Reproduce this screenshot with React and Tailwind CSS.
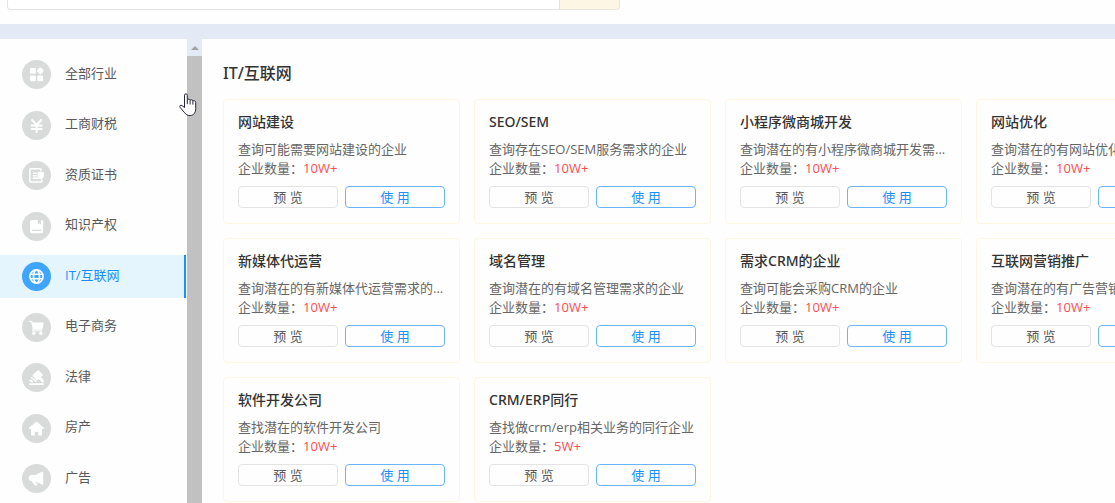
import React from 'react';

const industries = [
  { id: 'all', name: '全部行业', icon: GridIcon },
  { id: 'finance', name: '工商财税', icon: YenIcon },
  { id: 'cert', name: '资质证书', icon: CertIcon },
  { id: 'ip', name: '知识产权', icon: BookIcon },
  { id: 'it', name: 'IT/互联网', icon: GlobeIcon },
  { id: 'ecommerce', name: '电子商务', icon: CartIcon },
  { id: 'law', name: '法律', icon: GavelIcon },
  { id: 'house', name: '房产', icon: HomeIcon },
  { id: 'ads', name: '广告', icon: HornIcon },
];

const templates = [
  { title: '网站建设', desc: '查询可能需要网站建设的企业', count: '10W+' },
  { title: 'SEO/SEM', desc: '查询存在SEO/SEM服务需求的企业', count: '10W+' },
  { title: '小程序微商城开发', desc: '查询潜在的有小程序微商城开发需...', count: '10W+' },
  { title: '网站优化', desc: '查询潜在的有网站优化需求的企业', count: '10W+' },
  { title: '新媒体代运营', desc: '查询潜在的有新媒体代运营需求的...', count: '10W+' },
  { title: '域名管理', desc: '查询潜在的有域名管理需求的企业', count: '10W+' },
  { title: '需求CRM的企业', desc: '查询可能会采购CRM的企业', count: '10W+' },
  { title: '互联网营销推广', desc: '查询潜在的有广告营销需求的企业', count: '10W+' },
  { title: '软件开发公司', desc: '查找潜在的软件开发公司', count: '10W+' },
  { title: 'CRM/ERP同行', desc: '查找做crm/erp相关业务的同行企业', count: '5W+' },
];

// All sidebar icons share a 29x29 canvas, the size of the round badge
function Icon({ children }) {
  return (
    <svg viewBox="0 0 29 29" className="h-full w-full" fill="#fff" aria-hidden="true">
      {children}
    </svg>
  );
}

function GridIcon() {
  return (
    <Icon>
      <rect x="8" y="8" width="5.8" height="5.8" rx="1.3" />
      <rect x="8" y="15.4" width="5.8" height="5.8" rx="1.3" />
      <rect x="15.3" y="15.4" width="5.8" height="5.8" rx="1.3" />
      <rect x="15.5" y="8.1" width="5.6" height="5.6" rx="1.6" transform="rotate(45 18.3 10.9)" />
    </Icon>
  );
}

function YenIcon() {
  return (
    <Icon>
      <path
        d="M10 9l4.600 4.800L19.200 9M14.600 13.800v7.400M9.600 14.600h10M9.600 18h10"
        fill="none"
        stroke="#fff"
        strokeWidth="2"
        strokeLinecap="round"
      />
    </Icon>
  );
}

function CertIcon() {
  return (
    <Icon>
      <path
        d="M19 9.2V9c0-.7-.5-1.200-1.200-1.200H9C8.300 7.800 7.800 8.300 7.800 9v10.800c0 .7.500 1.200 1.200 1.200h9.600c.7 0 1.200-.5 1.200-1.200v-.6"
        fill="none"
        stroke="#fff"
        strokeWidth="1.6"
        strokeLinecap="round"
      />
      <path d="M10.800 12.200h4M10.800 14.700h4M10.800 17.200h5.400" fill="none" stroke="#fff" strokeWidth="1.400" />
      <path d="M15.600 11.200l3.100-.8 3.100.8v4c0 1.600-1.400 2.600-3.100 3.300-1.700-.7-3.100-1.700-3.100-3.300z" />
    </Icon>
  );
}

function BookIcon() {
  return (
    <Icon>
      <path d="M9.800 8h6v4.400l1.600-1.100 1.600 1.100V8h.4c1 0 1.800.8 1.800 1.800v9.600c0 1-.8 1.800-1.800 1.800H9.800c-1 0-1.800-.8-1.800-1.800V9.800C8 8.800 8.800 8 9.800 8z" />
      <path d="M10 18.300h9" stroke="#d9dbdb" strokeWidth="1.200" />
    </Icon>
  );
}

function GlobeIcon() {
  return (
    <Icon>
      <g fill="none" stroke="#fff" strokeWidth="1.600">
        <circle cx="14.500" cy="14.500" r="6.600" />
        <ellipse cx="14.500" cy="14.500" rx="3" ry="6.600" />
        <path d="M8.300 12.300h12.400M8.300 16.700h12.400" />
      </g>
    </Icon>
  );
}

function CartIcon() {
  return (
    <Icon>
      <path d="M7.200 7.700h2.300c.4 0 .7.200.8.600l.3 1.200h11.100l-1.200 6.500c-.1.400-.4.700-.8.700h-8.800L9.100 9.100H7.200z" />
      <path d="M11 16l-.6 1.900h9.600" fill="none" stroke="#fff" strokeWidth="1" />
      <circle cx="11.800" cy="20.300" r="1.700" />
      <circle cx="18.800" cy="20.300" r="1.700" />
    </Icon>
  );
}

function GavelIcon() {
  return (
    <Icon>
      <rect x="11.600" y="8.600" width="8.200" height="7.200" rx="1" transform="rotate(-42 15.700 12.200)" />
      <path d="M16.500 13.500l4.200 4.600" stroke="#fff" strokeWidth="2.600" strokeLinecap="round" />
      <path d="M9.800 14.800l4 3.400M8 17.500l2.200 1.100" stroke="#fff" strokeWidth="1.700" strokeLinecap="round" />
      <rect x="7" y="20.200" width="15" height="1.800" rx=".9" />
    </Icon>
  );
}

function HomeIcon() {
  return (
    <Icon>
      <path d="M13.700 8a1.300 1.300 0 0 1 1.600 0l6.500 5.700c.5.500.2 1.300-.5 1.300H20v5.400c0 .7-.5 1.200-1.200 1.200h-2.500v-3.500h-3.600v3.500h-2.500c-.7 0-1.200-.5-1.200-1.200V15H7.700c-.7 0-1-.8-.5-1.300z" />
    </Icon>
  );
}

function HornIcon() {
  return (
    <Icon>
      <path d="M19.900 7.800c.6-.4 1.300 0 1.300.7v11.400c0 .7-.7 1.100-1.300.7l-5.500-2.700-.9-.2 1.700 2.500c.4.600 0 1.400-.7 1.400h-1.300c-.4 0-.7-.2-.9-.5l-2.500-3.800c-1.900-.3-3.300-1.500-3.300-3.100 0-1.800 1.500-3.200 3.500-3.200h3.500z" />
    </Icon>
  );
}

function SearchBar() {
  return (
    <header className="h-6 shrink-0 bg-[#fefefe] px-[7px]">
      <form className="flex h-[10px] w-full max-w-[613px]" onSubmit={(e) => e.preventDefault()}>
        <input
          type="text"
          aria-label="搜索"
          className="min-w-0 flex-1 rounded-bl border border-t-0 border-[#e3e3e3] bg-white px-3 outline-none"
        />
        <button
          type="submit"
          aria-label="搜索"
          className="w-[60px] rounded-br border border-t-0 border-l-0 border-[#e8e6e0] bg-[#fef6e4]"
        />
      </form>
    </header>
  );
}

function Sidebar({ active, onSelect }) {
  return (
    <nav className="flex w-[187px] shrink-0 flex-col justify-between pt-[14px] pr-px pb-[3px]">
      {industries.map(({ id, name, icon: ItemIcon }) => {
        const isActive = id === active;
        return (
          <button
            key={id}
            type="button"
            onClick={() => onSelect(id)}
            className={`flex h-[43px] items-center gap-[14px] border-r-2 pl-[22px] text-[13px] ${
              isActive
                ? 'border-[#1890ff] bg-[#e5f5fe] text-[#1890ff]'
                : 'border-transparent text-[#595959]'
            }`}
          >
            <span className={`h-[29px] w-[29px] rounded-full ${isActive ? 'bg-[#40a5fe]' : 'bg-[#d9dbdb]'}`}>
              <ItemIcon />
            </span>
            <span className="pb-[2px]">{name}</span>
          </button>
        );
      })}
    </nav>
  );
}

function ScrollBar() {
  return (
    <div className="flex w-[15px] shrink-0 flex-col bg-[#e4eaf5]">
      <div className="flex h-[17px] items-center justify-center">
        <svg viewBox="0 0 8 4" className="h-1 w-2" aria-hidden="true">
          <path d="M0 4L4 0l4 4z" fill="#a3a3a3" />
        </svg>
      </div>
      <div className="flex-1 bg-[#c1c1c1]" />
    </div>
  );
}

function TemplateCard({ title, desc, count }) {
  return (
    <article className="rounded border border-[#fdf6e0] px-[14px] pt-3 pb-[15px]">
      <h3 className="mb-2 font-['Noto_Sans','Noto_Sans_CJK_SC',sans-serif] text-[14px] leading-5 font-medium text-[#333]">
        {title}
      </h3>
      <p className="text-[13px] leading-[19px] whitespace-nowrap text-[#666]">{desc}</p>
      <p className="mb-2 text-[13px] leading-[19px] text-[#666]">
        企业数量：<span className="text-[#ff4d4f]">{count}</span>
      </p>
      <div className="flex gap-[7px] text-[13px] leading-5">
        <button type="button" className="flex-1 rounded border border-[#e3e3e3] text-[#595959]">
          预 览
        </button>
        <button type="button" className="flex-1 rounded border border-[#69b5ff] text-[#1890ff]">
          使 用
        </button>
      </div>
    </article>
  );
}

function HandPointer() {
  return (
    <svg
      viewBox="0 0 18 24"
      className="pointer-events-none absolute top-[93px] left-[179px] h-6 w-[18px]"
      fill="#fff"
      stroke="#26263a"
      strokeWidth="1"
      strokeLinejoin="round"
      aria-hidden="true"
    >
      <path d="M5.500 14.500V2.200c0-1.900 2.800-1.900 2.800 0v4.600c.4-1 2.600-.9 2.800.5.500-.9 2.600-.7 2.800.7.700-.7 2.800-.3 2.800 1.400v6.200c0 3.500-1.700 6.900-5.500 6.900-2.800 0-4.200-.8-5.500-2.700L1 14.300c-1-1.600.7-2.700 2.100-1.600z" />
      <path d="M8.300 6.800v4.400M11.100 7.300v4.100M13.900 8v3.600" fill="none" />
    </svg>
  );
}

export default function App() {
  const [active, setActive] = React.useState('it');

  return (
    <div className="relative flex h-screen flex-col overflow-hidden bg-[#e4eaf5] font-['Open_Sans','Noto_Sans_CJK_SC',sans-serif]">
      <SearchBar />
      <div className="mt-[15px] flex min-h-0 flex-1 bg-[#fefefe]">
        <Sidebar active={active} onSelect={setActive} />
        <ScrollBar />
        <main className="min-w-0 flex-1 overflow-hidden pt-[22px] pl-[21px]">
          <h2 className="mb-[14px] font-['Noto_Sans','Noto_Sans_CJK_SC',sans-serif] text-[16px] leading-6 font-medium text-[#333]">
            IT/互联网
          </h2>
          <div className="grid grid-cols-[repeat(4,237px)] gap-[14px]">
            {templates.map((item) => (
              <TemplateCard key={item.title} {...item} />
            ))}
          </div>
        </main>
      </div>
      <HandPointer />
    </div>
  );
}
